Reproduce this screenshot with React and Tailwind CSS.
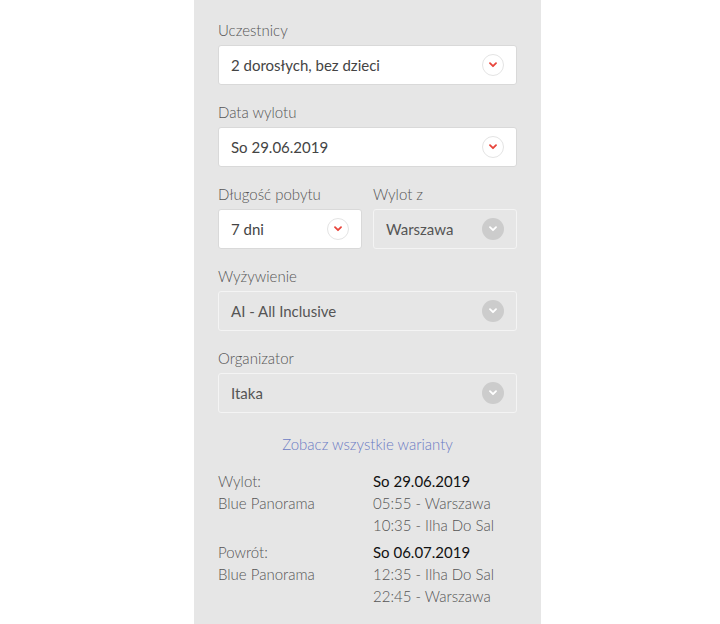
import { Fragment } from 'react';

const FONT = { fontFamily: 'Lato, "Noto Sans", sans-serif' };

function Chevron({ disabled }) {
  return (
    <span
      className={
        disabled
          ? 'flex h-[22px] w-[22px] items-center justify-center rounded-full bg-[#cccccc]'
          : 'flex h-[22px] w-[22px] items-center justify-center rounded-full border border-[#e4e4e4] bg-white'
      }
    >
      <svg width="8" height="6" viewBox="0 0 8 6" fill="none">
        <path
          d="M1 1.2 L4 4.2 L7 1.2"
          stroke={disabled ? '#ffffff' : '#e8453c'}
          strokeWidth="1.8"
          strokeLinecap="round"
          strokeLinejoin="round"
        />
      </svg>
    </span>
  );
}

function Select({ value, disabled }) {
  return (
    <div
      className={
        disabled
          ? 'flex h-10 items-center justify-between rounded-[3px] border border-[#f4f4f4] bg-[#e6e6e6] pl-3 pr-3 text-[15px] text-[#555]'
          : 'flex h-10 items-center justify-between rounded-[3px] border border-[#d9d9d9] bg-white pl-3 pr-3 text-[15px] text-[#444]'
      }
    >
      <span>{value}</span>
      <Chevron disabled={disabled} />
    </div>
  );
}

function Field({ label, value, disabled, className = '' }) {
  return (
    <div className={className}>
      <div className="mb-[4px] h-[22px] text-[15px] leading-[22px] font-light text-[#555]">{label}</div>
      <Select value={value} disabled={disabled} />
    </div>
  );
}

const FLIGHTS = [
  { dir: 'Wylot:', line: 'Blue Panorama', date: 'So 29.06.2019', legs: ['05:55 - Warszawa', '10:35 - Ilha Do Sal'] },
  { dir: 'Powrót:', line: 'Blue Panorama', date: 'So 06.07.2019', legs: ['12:35 - Ilha Do Sal', '22:45 - Warszawa'] },
];

export default function App() {
  return (
    <div className="flex min-h-[624px] bg-white pl-[194px]" style={FONT}>
      <div className="w-[347px] bg-[#e6e6e6] px-6 pt-[19px] pb-4">
        <Field label="Uczestnicy" value="2 dorosłych, bez dzieci" className="mb-4" />
        <Field label="Data wylotu" value="So 29.06.2019" className="mb-4" />
        <div className="mb-4 grid grid-cols-2 gap-[11px]">
          <Field label="Długość pobytu" value="7 dni" />
          <Field label="Wylot z" value="Warszawa" disabled />
        </div>
        <Field label="Wyżywienie" value="AI - All Inclusive" disabled className="mb-4" />
        <Field label="Organizator" value="Itaka" disabled />

        <div className="mt-[20px] text-center text-[15px] leading-[22px] font-light text-[#6b7bc4]">
          Zobacz wszystkie warianty
        </div>

        <div className="mt-[15px] grid grid-cols-2 gap-x-[11px] text-[15px] leading-[22px] font-light text-[#555]">
          {FLIGHTS.map((f, i) => (
            <Fragment key={f.dir}>
              <div className={i > 0 ? 'mt-[5px]' : ''}>
                <div>{f.dir}</div>
                <div>{f.line}</div>
              </div>
              <div className={i > 0 ? 'mt-[5px]' : ''}>
                <div className="font-normal text-[#111]">{f.date}</div>
                {f.legs.map((l) => (
                  <div key={l}>{l}</div>
                ))}
              </div>
            </Fragment>
          ))}
        </div>
      </div>
    </div>
  );
}
